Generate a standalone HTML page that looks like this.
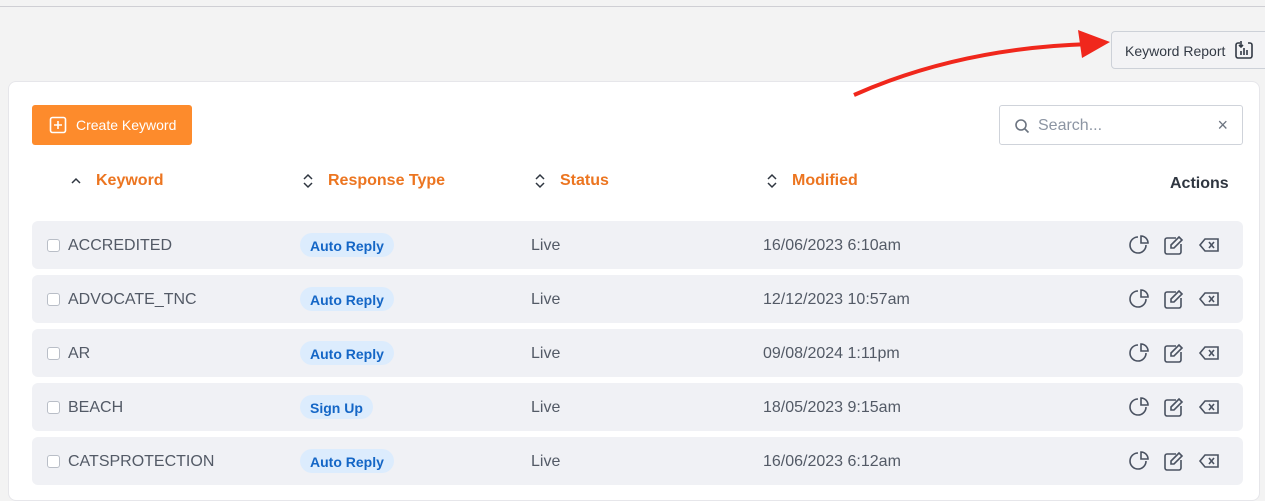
<!DOCTYPE html>
<html><head><style>
*{box-sizing:border-box;margin:0;padding:0}
body{width:1265px;height:483px;overflow:hidden;background:#f3f3f3;font-family:"Liberation Sans",Arial,sans-serif;position:relative}
.topline{position:absolute;left:0;top:6px;width:1265px;height:1px;background:#cfcfd4}
.kr{position:absolute;left:1111px;top:31px;width:160px;height:38px;border:1px solid #cdd1d8;border-radius:4px;background:#f3f3f5;font-size:14px;color:#333a45;padding:11px 0 0 13px}
.kr svg{position:absolute;left:122px;top:8px}
.card{position:absolute;left:8px;top:81px;width:1252px;height:420px;background:#fff;border:1px solid #e6e6ea;border-radius:8px}
.btn{position:absolute;left:32px;top:105px;width:160px;height:40px;background:#fd8b2c;border-radius:3px;color:#fff;font-size:14px;padding:12px 0 0 44px}
.btn svg{position:absolute;left:17px;top:11px}
.search{position:absolute;left:999px;top:105px;width:244px;height:40px;border:1px solid #cfd3da;border-radius:3px;font-size:16px;color:#8c95a3;padding:11px 0 0 38px}
.search .s{position:absolute;left:14px;top:12px}
.search .x{position:absolute;right:14px;top:9px;font-size:18px;color:#6c7480}
.th{position:absolute;top:172px;font-size:16px;font-weight:bold;color:#ec7520}
.th svg{position:absolute;left:-26px;top:1px}
.act{position:absolute;left:1170px;top:175px;font-size:16px;font-weight:bold;color:#2f3640}
.row{position:absolute;left:32px;width:1211px;height:48px;background:#f0f1f5;border-radius:6px;font-size:16px;color:#535a66}
.row .cb{position:absolute;left:15px;top:18px;width:13px;height:13px;border:1px solid #b9bec7;border-radius:3px;background:#fff}
.row .k{position:absolute;left:36px;top:16px}
.row .tag{position:absolute;left:268px;top:12px;height:24px;padding:5px 10px 0;border-radius:12px;background:#dcecfd;color:#1466c6;font-size:14px;font-weight:bold}
.row .st{position:absolute;left:499px;top:16px}
.row .d{position:absolute;left:731px;top:16px}
.row .ic{position:absolute;left:1097px;top:13px}
.arrow{position:absolute;left:850px;top:28px;z-index:5}
</style></head><body>
<div class="topline"></div>
<div class="kr">Keyword Report<svg width="20" height="20" viewBox="0 0 20 20" fill="none" stroke="#333a45" stroke-width="1.6"><path d="M6 3H4a2 2 0 0 0-2 2v11a2 2 0 0 0 2 2h12a2 2 0 0 0 2-2V5a2 2 0 0 0-2-2h-2"/><path d="M7 1v6M5 5l2 2 2-2M7 11v4M10 8v7M13 10v5"/></svg></div>
<div class="card"></div>
<svg class="arrow" width="260" height="72"><path d="M4 67 Q110 20 240 16" stroke="#f0271c" stroke-width="4" fill="none"/><path d="M228 2 L260 14 L232 30 Z" fill="#f0271c"/></svg>
<div class="btn"><svg width="18" height="18" viewBox="0 0 18 18" fill="none" stroke="#fff" stroke-width="1.6"><rect x="1.5" y="1.5" width="15" height="15" rx="2"/><path d="M9 5v8M5 9h8"/></svg>Create Keyword</div>
<div class="search"><svg class="s" width="16" height="16" viewBox="0 0 16 16" fill="none" stroke="#6c7480" stroke-width="1.6"><circle cx="7" cy="7" r="5"/><path d="M11 11l3.5 3.5"/></svg>Search...<span class="x">×</span></div>
<div class="th" style="left:96px"><svg width="12" height="12" viewBox="0 0 12 12" fill="none" stroke="#2f3640" stroke-width="1.5" style="top:3px"><path d="M2 8l4-4 4 4"/></svg>Keyword</div>
<div class="th" style="left:328px"><svg width="12" height="16" viewBox="0 0 12 16" fill="none" stroke="#2f3640" stroke-width="1.5"><path d="M2 6l4-4 4 4M2 10l4 4 4-4"/></svg>Response Type</div>
<div class="th" style="left:560px"><svg width="12" height="16" viewBox="0 0 12 16" fill="none" stroke="#2f3640" stroke-width="1.5"><path d="M2 6l4-4 4 4M2 10l4 4 4-4"/></svg>Status</div>
<div class="th" style="left:792px"><svg width="12" height="16" viewBox="0 0 12 16" fill="none" stroke="#2f3640" stroke-width="1.5"><path d="M2 6l4-4 4 4M2 10l4 4 4-4"/></svg>Modified</div>
<div class="act">Actions</div>

<div class="row" style="top:221px"><div class="cb"></div><div class="k">ACCREDITED</div><div class="tag">Auto Reply</div><div class="st">Live</div><div class="d">16/06/2023 6:10am</div><svg class="ic" width="100" height="22" viewBox="0 0 100 22" fill="none" stroke="#4a5261" stroke-width="1.6"><path d="M9 3a8 8 0 1 0 8 8"/><path d="M12 2v7h7a7 7 0 0 0-7-7z"/><path d="M47 4h-9a2 2 0 0 0-2 2v12a2 2 0 0 0 2 2h12a2 2 0 0 0 2-2v-8"/><path d="M50 3l3 3-8 8h-3v-3z"/><path d="M71 11l5-6h13v12H76z"/><path d="M80 8l5 6M85 8l-5 6"/></svg></div>
<div class="row" style="top:275px"><div class="cb"></div><div class="k">ADVOCATE_TNC</div><div class="tag">Auto Reply</div><div class="st">Live</div><div class="d">12/12/2023 10:57am</div><svg class="ic" width="100" height="22" viewBox="0 0 100 22" fill="none" stroke="#4a5261" stroke-width="1.6"><path d="M9 3a8 8 0 1 0 8 8"/><path d="M12 2v7h7a7 7 0 0 0-7-7z"/><path d="M47 4h-9a2 2 0 0 0-2 2v12a2 2 0 0 0 2 2h12a2 2 0 0 0 2-2v-8"/><path d="M50 3l3 3-8 8h-3v-3z"/><path d="M71 11l5-6h13v12H76z"/><path d="M80 8l5 6M85 8l-5 6"/></svg></div>
<div class="row" style="top:329px"><div class="cb"></div><div class="k">AR</div><div class="tag">Auto Reply</div><div class="st">Live</div><div class="d">09/08/2024 1:11pm</div><svg class="ic" width="100" height="22" viewBox="0 0 100 22" fill="none" stroke="#4a5261" stroke-width="1.6"><path d="M9 3a8 8 0 1 0 8 8"/><path d="M12 2v7h7a7 7 0 0 0-7-7z"/><path d="M47 4h-9a2 2 0 0 0-2 2v12a2 2 0 0 0 2 2h12a2 2 0 0 0 2-2v-8"/><path d="M50 3l3 3-8 8h-3v-3z"/><path d="M71 11l5-6h13v12H76z"/><path d="M80 8l5 6M85 8l-5 6"/></svg></div>
<div class="row" style="top:383px"><div class="cb"></div><div class="k">BEACH</div><div class="tag">Sign Up</div><div class="st">Live</div><div class="d">18/05/2023 9:15am</div><svg class="ic" width="100" height="22" viewBox="0 0 100 22" fill="none" stroke="#4a5261" stroke-width="1.6"><path d="M9 3a8 8 0 1 0 8 8"/><path d="M12 2v7h7a7 7 0 0 0-7-7z"/><path d="M47 4h-9a2 2 0 0 0-2 2v12a2 2 0 0 0 2 2h12a2 2 0 0 0 2-2v-8"/><path d="M50 3l3 3-8 8h-3v-3z"/><path d="M71 11l5-6h13v12H76z"/><path d="M80 8l5 6M85 8l-5 6"/></svg></div>
<div class="row" style="top:437px"><div class="cb"></div><div class="k">CATSPROTECTION</div><div class="tag">Auto Reply</div><div class="st">Live</div><div class="d">16/06/2023 6:12am</div><svg class="ic" width="100" height="22" viewBox="0 0 100 22" fill="none" stroke="#4a5261" stroke-width="1.6"><path d="M9 3a8 8 0 1 0 8 8"/><path d="M12 2v7h7a7 7 0 0 0-7-7z"/><path d="M47 4h-9a2 2 0 0 0-2 2v12a2 2 0 0 0 2 2h12a2 2 0 0 0 2-2v-8"/><path d="M50 3l3 3-8 8h-3v-3z"/><path d="M71 11l5-6h13v12H76z"/><path d="M80 8l5 6M85 8l-5 6"/></svg></div>
</body></html>
